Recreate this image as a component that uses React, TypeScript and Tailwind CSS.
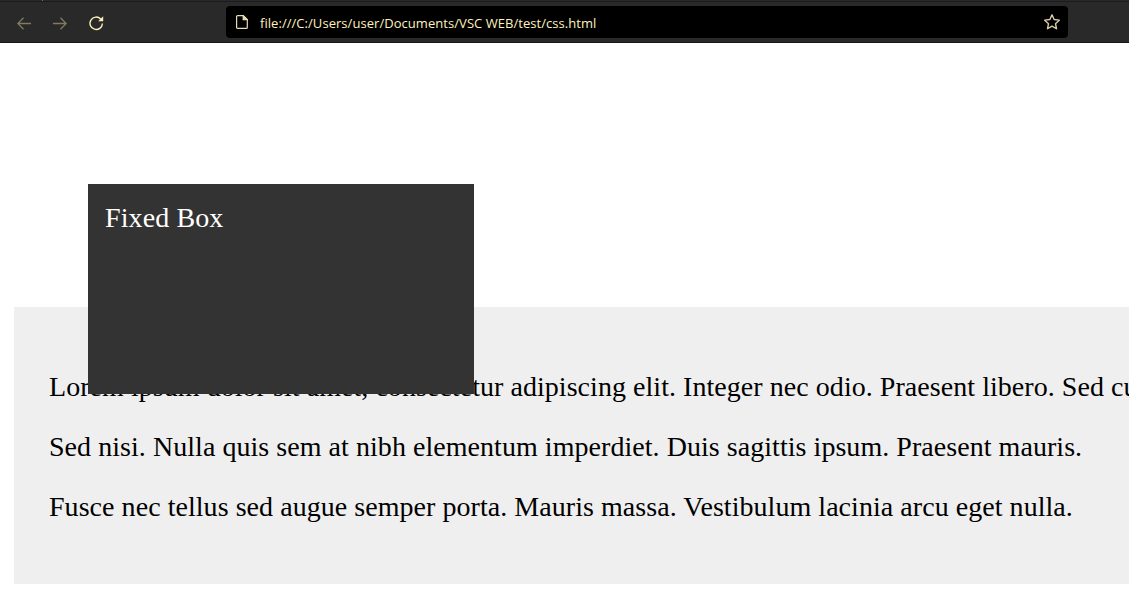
function BackArrow() {
  return (
    <svg width="14" height="13" viewBox="0 0 14 13" fill="none" stroke="#827a61" strokeWidth="1.3">
      <path d="M14 6.5H1M6.5 .8L.8 6.5l5.7 5.7" />
    </svg>
  );
}

function ForwardArrow() {
  return (
    <svg width="14" height="13" viewBox="0 0 14 13" fill="none" stroke="#827a61" strokeWidth="1.3">
      <path d="M0 6.5h13M7.5 .8l5.7 5.7-5.7 5.7" />
    </svg>
  );
}

function Reload() {
  return (
    <svg width="15" height="15" viewBox="0 0 15 15" fill="none">
      <path d="M11.7 3A6.2 6.2 0 1 0 13.4 7.5" stroke="#fdf0bd" strokeWidth="1.4" />
      <path d="M14.2 .3v5H9.2z" fill="#fdf0bd" />
    </svg>
  );
}

function PageIcon() {
  return (
    <svg width="12" height="14" viewBox="0 0 12 14" fill="none" stroke="#e9dcae" strokeWidth="1.2">
      <path d="M1.6.6h5.6l4.1 4.1v7.7a1 1 0 0 1-1 1H1.6a1 1 0 0 1-1-1V1.6a1 1 0 0 1 1-1z" />
      <path d="M7.2.6v4.1h4.1z" fill="#e9dcae" />
    </svg>
  );
}

function Star() {
  return (
    <svg width="16" height="16" viewBox="0 0 16 16" fill="none" stroke="#d9cda2" strokeWidth="1.4" strokeLinejoin="round">
      <path d="M8 .8l2.15 4.75 5.15.6-3.8 3.5 1 5.1L8 12.2l-4.5 2.55 1-5.1L.7 6.15l5.15-.6z" />
    </svg>
  );
}

export default function App() {
  return (
    <div className="relative h-[591px] w-[1129px] overflow-hidden bg-white font-['Liberation_Serif',serif] text-[28px] leading-8 text-black">
      <div className="h-px bg-[#292929] pl-[42px]">
        <div className="h-px w-px bg-[#77705c]" />
      </div>
      <header className="flex h-[42px] items-start border-t border-b border-t-[#1b1b1b] border-b-[#171717] bg-[#292929]">
        <nav className="flex h-[42px] w-[226px] shrink-0 items-center gap-[22px] pl-[17px]">
          <BackArrow />
          <ForwardArrow />
          <Reload />
        </nav>
        <div className="mt-1 flex h-8 w-[842px] items-center rounded bg-black pr-2 pl-[10px]">
          <PageIcon />
          <span className="ml-3 flex-1 pt-0.5 font-['Open_Sans',sans-serif] text-[13px] leading-4 tracking-[0.05px] whitespace-nowrap text-[#fff1bd]">
            file:///C:/Users/user/Documents/VSC WEB/test/css.html
          </span>
          <Star />
        </div>
      </header>

      <main className="pt-[264px] pl-[14px]">
        <section className="flex h-[277px] flex-col gap-7 overflow-hidden bg-[#efefef] pt-16 pl-[35px] tracking-[0.047px] whitespace-nowrap">
          <p>Lorem ipsum dolor sit amet, consectetur adipiscing elit. Integer nec odio. Praesent libero. Sed cursus</p>
          <p>Sed nisi. Nulla quis sem at nibh elementum imperdiet. Duis sagittis ipsum. Praesent mauris.</p>
          <p>Fusce nec tellus sed augue semper porta. Mauris massa. Vestibulum lacinia arcu eget nulla.</p>
        </section>
      </main>

      <aside className="absolute top-[184px] left-[88px] h-[210px] w-[386px] bg-[#333] pt-[18px] pl-[17px] tracking-[0.1px] text-white">
        Fixed Box
      </aside>
    </div>
  );
}
